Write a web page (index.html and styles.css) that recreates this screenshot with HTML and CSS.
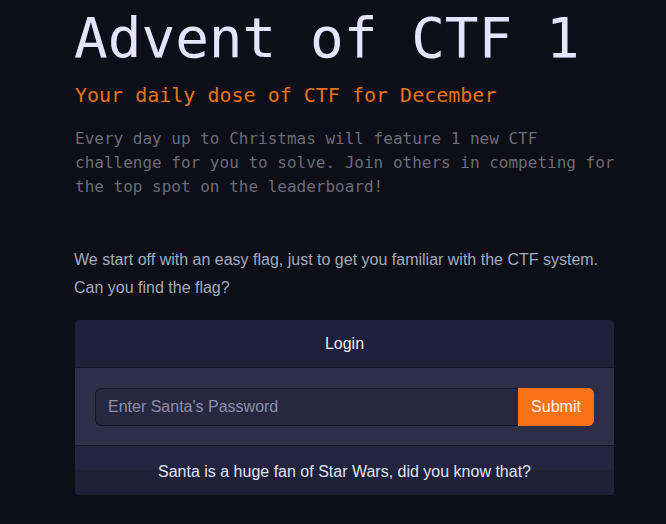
FILE: index.html
```html
<!DOCTYPE html>
<html>
<head>
<meta charset="utf-8">
<link rel="stylesheet" href="styles.css">
</head>
<body>
<main class="page">
  <h1 class="title">Advent of CTF 1</h1>
  <h2 class="subtitle">Your daily dose of CTF for December</h2>
  <p class="intro">Every day up to Christmas will feature 1 new CTF challenge for you to solve. Join others in competing for the top spot on the leaderboard!</p>
  <p class="desc">We start off with an easy flag, just to get you familiar with the CTF system. Can you find the flag?</p>
  <section class="card">
    <div class="card-head">Login</div>
    <form class="card-body">
      <input class="pw" type="password" placeholder="Enter Santa's Password">
      <button class="submit" type="button">Submit</button>
    </form>
    <div class="card-foot">Santa is a huge fan of Star Wars, did you know that?</div>
  </section>
</main>
</body>
</html>
```
FILE: styles.css
```css
* { box-sizing: border-box; }
html, body { margin: 0; padding: 0; }
body {
  background: #0d0e17;
  font-family: "Liberation Sans", Arial, sans-serif;
  overflow: hidden;
}
.page {
  width: 539px;
  margin-left: 75px;
}
.title {
  margin: 0 0 0 -1px;
  padding-top: 4px;
  font-family: "DejaVu Sans Mono", monospace;
  font-weight: normal;
  font-size: 56px;
  line-height: 68px;
  color: #e6e3ff;
}
.subtitle {
  margin: 9px 0 0;
  font-family: "DejaVu Sans Mono", monospace;
  font-weight: normal;
  font-size: 20px;
  line-height: 28px;
  color: #e8731a;
}
.intro {
  width: 546px;
  margin: 18px 0 0;
  font-family: "DejaVu Sans Mono", monospace;
  font-size: 16px;
  line-height: 24px;
  color: #6b6c78;
}
.desc {
  margin: 47px 0 0 -1px;
  font-size: 16px;
  line-height: 28px;
  color: #a3abbb;
}
.card {
  margin-top: 18px;
  border-radius: 4px;
  overflow: hidden;
  background: #1f2039;
}
.card-head {
  height: 48px;
  display: flex;
  align-items: center;
  justify-content: center;
  color: #e8eaf5;
  font-size: 16px;
  border-bottom: 1px solid #15162a;
}
.card-body {
  margin: 0;
  background: #302f4a;
  padding: 20px 20px 19px;
  display: flex;
  border-bottom: 1px solid #15162a;
}
.pw {
  flex: 1;
  height: 38px;
  margin: 0;
  background: #272840;
  border: 1px solid #15162a;
  border-right: none;
  border-radius: 6px 0 0 6px;
  padding: 0 12px;
  font-family: "Liberation Sans", Arial, sans-serif;
  font-size: 16px;
  color: #e8eaf5;
  outline: none;
}
.pw::placeholder { color: #8c8ea8; }
.submit {
  width: 76px;
  height: 38px;
  margin: 0;
  border: none;
  border-radius: 0 6px 6px 0;
  background: #f97316;
  color: #fff3e8;
  font-family: "Liberation Sans", Arial, sans-serif;
  font-size: 16px;
}
.card-foot {
  height: 49px;
  display: flex;
  align-items: center;
  justify-content: center;
  padding-top: 2px;
  color: #dfe3f5;
  font-size: 16px;
  background: linear-gradient(#232540 0, #232540 24px, #1f2139 24px);
}
```
